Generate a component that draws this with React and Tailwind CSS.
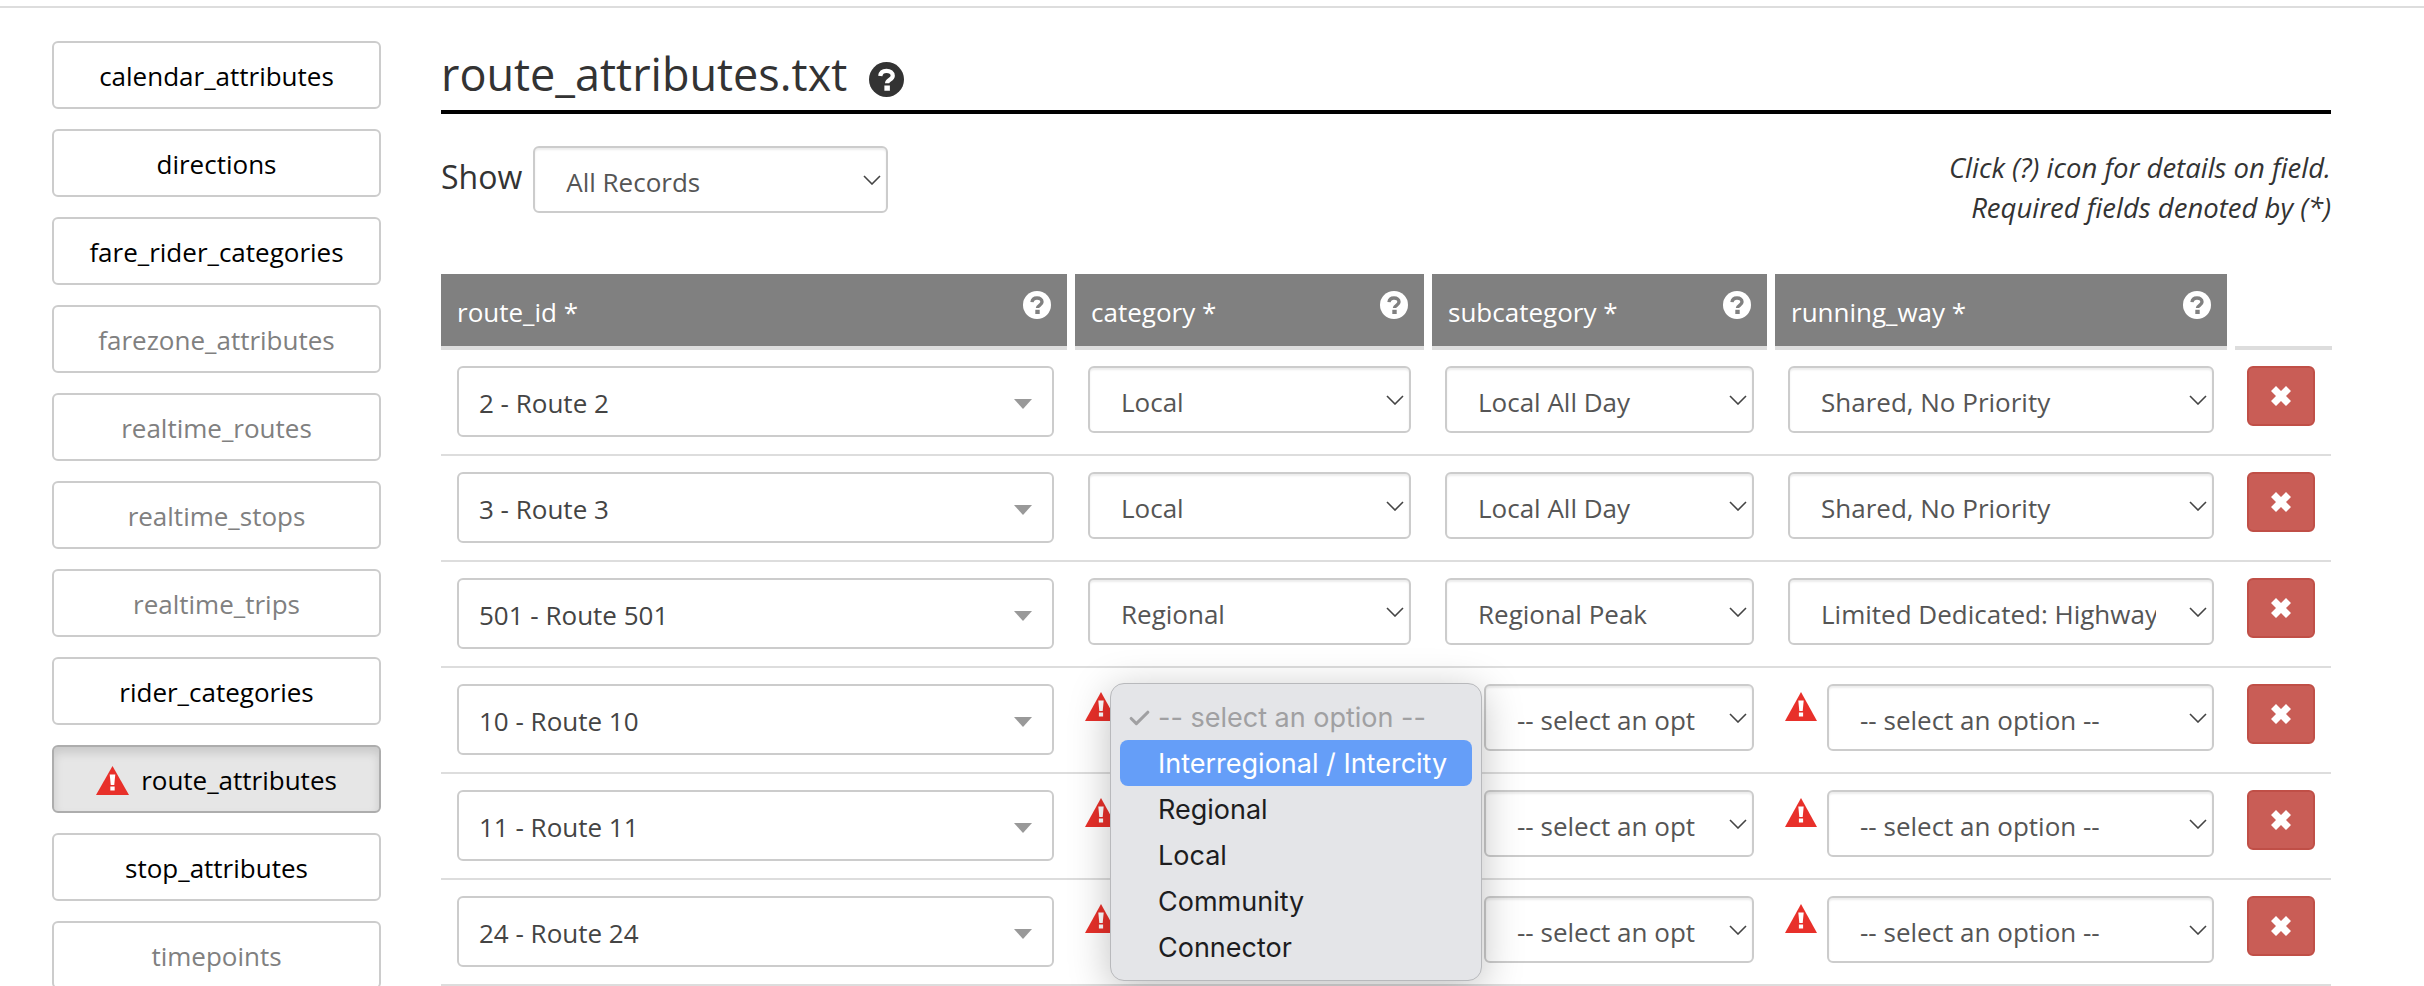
import { Check } from "lucide-react";

const NAV = [
  { label: "calendar_attributes", tone: "on" },
  { label: "directions", tone: "on" },
  { label: "fare_rider_categories", tone: "on" },
  { label: "farezone_attributes", tone: "off" },
  { label: "realtime_routes", tone: "off" },
  { label: "realtime_stops", tone: "off" },
  { label: "realtime_trips", tone: "off" },
  { label: "rider_categories", tone: "on" },
  { label: "route_attributes", tone: "active" },
  { label: "stop_attributes", tone: "on" },
  { label: "timepoints", tone: "off" },
];

const PLACEHOLDER = "-- select an option --";

const ROWS = [
  { route: "2 - Route 2", category: "Local", subcategory: "Local All Day", way: "Shared, No Priority" },
  { route: "3 - Route 3", category: "Local", subcategory: "Local All Day", way: "Shared, No Priority" },
  { route: "501 - Route 501", category: "Regional", subcategory: "Regional Peak", way: "Limited Dedicated: Highway" },
  { route: "10 - Route 10", focused: true },
  { route: "11 - Route 11" },
  { route: "24 - Route 24" },
];

const GRID = "grid grid-cols-[626px_349px_335px_452px_97px] gap-x-2";

const Help = ({ className = "", mark = "#fff" }) => (
  <svg viewBox="0 0 28 28" className={className}>
    <circle cx="14" cy="14" r="14" fill="currentColor" />
    <path d="M9 11.2c.3-2.9 2.300-4.200 5-4.200 2.900 0 5 1.500 5 4 0 3.200-4.500 3.300-4.500 6" fill="none" stroke={mark} strokeWidth="3.400" />
    <rect x="12.300" y="18.800" width="4.400" height="4.200" fill={mark} />
  </svg>
);

const Warn = ({ className = "" }) => (
  <svg viewBox="0 0 32 29" preserveAspectRatio="none" className={className}>
    <path d="M16 0 L32 29 L0 29 Z" fill="#e8302a" />
    <path d="M13.300 8.500h5.400l-1 10.500h-3.400z" fill="#fff" />
    <rect x="13.900" y="20.500" width="4.200" height="4" fill="#fff" />
  </svg>
);

const Field = ({ value, focused = false }) => (
  <div className="relative flex-1 min-w-0">
    <select
      defaultValue={value}
      className={`appearance-none block w-full h-[67px] pl-[31px] pr-[56px] pt-[5px] rounded-md border-2 border-[#ccc] bg-white text-[26px] text-[#555] shadow-[inset_0_2px_2px_rgba(0,0,0,0.075)] ${
        focused ? "shadow-[0_0_16px_rgba(102,175,233,0.7)]" : ""
      }`}
    >
      <option>{value}</option>
    </select>
    <svg viewBox="0 0 18 10" className="absolute right-[7px] top-[29px] w-[18px] h-[10px] text-[#444]">
      <path d="M1 1l8 8 8-8" fill="none" stroke="currentColor" strokeWidth="1.600" />
    </svg>
  </div>
);

const OptionCell = ({ value, focused }) => (
  <div className="flex items-start gap-[10px] pl-[13px] pr-[13px]">
    {!value && <Warn className="w-[32px] h-[29px] mt-2 -ml-[3px] shrink-0" />}
    <Field value={value || PLACEHOLDER} focused={focused} />
  </div>
);

function Sidebar() {
  return (
    <div className="w-[329px] shrink-0 flex flex-col gap-5">
      {NAV.map((item) => (
        <button
          key={item.label}
          className={`h-[68px] shrink-0 flex items-center justify-center gap-3 pt-[3px] rounded-md border-2 text-[26px] ${
            item.tone === "active"
              ? "bg-[#e6e6e6] border-[#adadad] text-black shadow-[inset_0_6px_10px_rgba(0,0,0,0.125)]"
              : item.tone === "on"
                ? "bg-white border-[#ccc] text-black"
                : "bg-white border-[#ccc] text-[#808080]"
          }`}
        >
          {item.tone === "active" && <Warn className="w-[33px] h-[29px]" />}
          {item.label}
        </button>
      ))}
    </div>
  );
}

function MenuPopup() {
  return (
    <div className="absolute left-[1110px] top-[683px] w-[372px] h-[298px] pt-[10px] px-[9px] rounded-[14px] border border-[#b8b9bc] bg-[#e4e5e8] shadow-[0_8px_40px_rgba(0,0,0,0.25)] text-[#1d1d1f] text-[27px] [font-family:Inter,sans-serif]">
      <div className="relative h-[46px] leading-[48px] pl-[38px] text-[#a0a0a2]">
        <Check size={25} strokeWidth={3} className="absolute left-[7px] top-[12px]" />
        {PLACEHOLDER}
      </div>
      <div className="h-[46px] leading-[48px] pl-[38px] rounded-lg bg-[#659ef8] text-white">Interregional / Intercity</div>
      {["Regional", "Local", "Community", "Connector"].map((label) => (
        <div key={label} className="h-[46px] leading-[48px] pl-[38px]">
          {label}
        </div>
      ))}
    </div>
  );
}

export default function App() {
  return (
    <div className="relative h-[986px] overflow-hidden bg-white text-[#333] [font-family:'Open_Sans',sans-serif]">
      <div className="h-[8px] border-b-2 border-[#ddd]" />
      <div className="flex items-start pl-[52px] pt-[33px]">
        <Sidebar />
        <div className="ml-[60px] w-[1890px]">
          <div className="h-[73px] flex items-start gap-[22px] border-b-4 border-black">
            <h1 className="text-[45px] leading-[66px]">route_attributes.txt</h1>
            <Help className="w-[35px] h-[35px] mt-[21px] text-[#333]" mark="#fff" />
          </div>

          <div className="mt-8 flex items-start justify-between h-[67px]">
            <div className="flex items-center gap-[11px]">
              <span className="text-[32px] leading-[52px] -mt-[6px]">Show</span>
              <div className="w-[355px]">
                <Field value="All Records" />
              </div>
            </div>
            <div className="text-right italic text-[27.500px] leading-[40px] pt-[2px]">
              <div>Click (?) icon for details on field.</div>
              <div>Required fields denoted by (*)</div>
            </div>
          </div>

          <div className={`${GRID} mt-[61px]`}>
            {["route_id *", "category *", "subcategory *", "running_way *"].map((title) => (
              <div key={title} className="relative h-[76px] bg-[#808080] border-b-4 border-[#ddd] pl-4 pt-[18px] text-white text-[26px] leading-[40px]">
                {title}
                <Help className="absolute right-4 top-[17px] w-[28px] h-[28px] text-white" mark="#808080" />
              </div>
            ))}
            <div className="h-[76px] border-b-4 border-[#ddd]" />
          </div>

          {ROWS.map((row) => (
            <div key={row.route} className={`${GRID} h-[106px] pt-4 border-b-2 border-[#ddd]`}>
              <div className="pl-4 pr-[13px]">
                <div className="relative flex items-center h-[71px] pl-5 pt-[3px] rounded-md border-2 border-[#ccc] bg-white text-[26px] text-[#444]">
                  {row.route}
                  <span className="absolute right-[20px] top-[31px] border-x-[9.500px] border-t-[10px] border-x-transparent border-t-[#999]" />
                </div>
              </div>
              <OptionCell value={row.category} focused={row.focused} />
              <OptionCell value={row.subcategory} />
              <OptionCell value={row.way} />
              <div className="pl-3">
                <button className="w-[68px] h-[60px] flex items-center justify-center rounded-md border-2 border-[#c04f47] bg-[#c95d56]">
                  <svg viewBox="0 0 20 20" className="w-5 h-5 text-white">
                    <path d="M5 0l5 5 5-5 5 5-5 5 5 5-5 5-5-5-5 5-5-5 5-5-5-5z" fill="currentColor" />
                  </svg>
                </button>
              </div>
            </div>
          ))}
        </div>
      </div>
      <MenuPopup />
    </div>
  );
}
